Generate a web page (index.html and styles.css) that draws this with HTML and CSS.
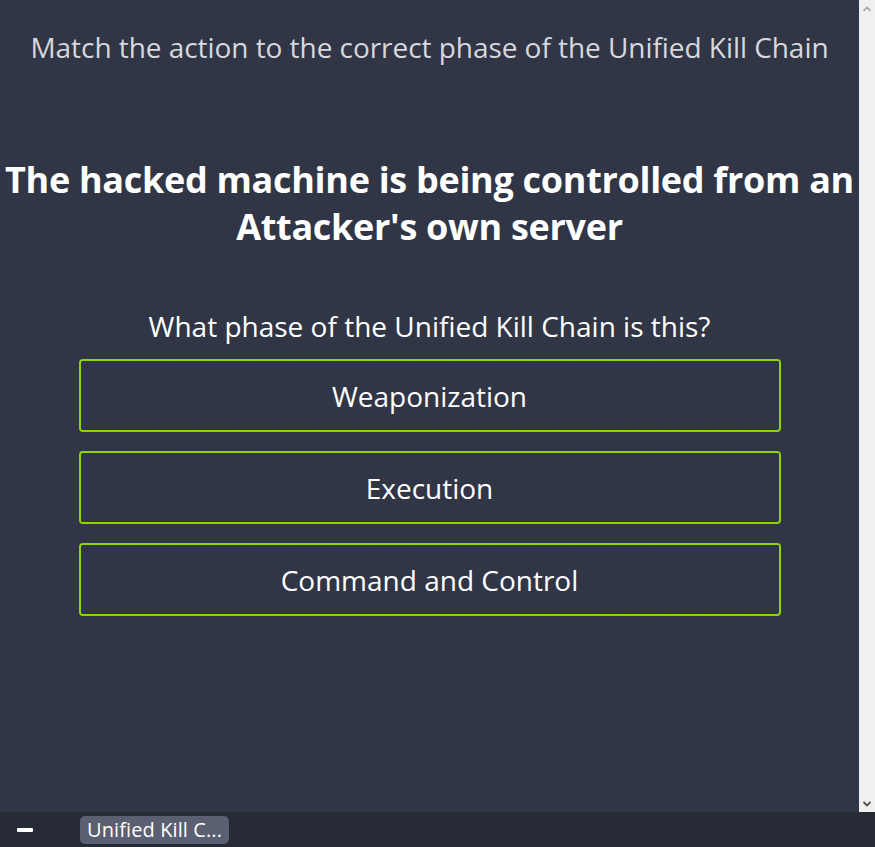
FILE: index.html
```html
<!DOCTYPE html>
<html>
<head>
<meta charset="utf-8">
<link rel="stylesheet" href="styles.css">
</head>
<body>
<div class="window">
  <div class="viewport">
    <main class="content">
      <p class="instruction">Match the action to the correct phase of the Unified Kill Chain</p>
      <h1 class="scenario">The hacked machine is being controlled from an Attacker's own server</h1>
      <p class="question">What phase of the Unified Kill Chain is this?</p>
      <div class="options">
        <button class="option">Weaponization</button>
        <button class="option">Execution</button>
        <button class="option">Command and Control</button>
      </div>
    </main>
    <div class="scrollbar">
      <svg class="arrow" width="16" height="16" viewBox="0 0 16 16"><path d="M4.5 10 L8 6.5 L11.5 10" fill="none" stroke="#a3a3a3" stroke-width="1.6"/></svg>
      <div class="track"></div>
      <svg class="arrow" width="16" height="16" viewBox="0 0 16 16"><path d="M4.5 6 L8 9.5 L11.5 6" fill="none" stroke="#505050" stroke-width="1.8"/></svg>
    </div>
  </div>
  <footer class="taskbar">
    <span class="minimize"></span>
    <span class="tab">Unified Kill C...</span>
  </footer>
</div>
</body>
</html>
```
FILE: styles.css
```css
html, body {
  margin: 0;
  padding: 0;
  background: #313646;
}
.window {
  width: 875px;
  height: 847px;
  display: flex;
  flex-direction: column;
  overflow: hidden;
  font-family: "Open Sans", "Noto Sans", sans-serif;
}
.viewport {
  height: 812px;
  display: flex;
}
.content {
  flex: 1;
  background: #313646;
  display: flex;
  flex-direction: column;
  align-items: center;
  color: #ffffff;
}
.instruction {
  margin: 28px 0 0;
  font-size: 28px;
  line-height: 38px;
  color: #d6d8de;
  white-space: nowrap;
  letter-spacing: -0.05px;
}
.scenario {
  margin: 90px 0 0;
  font-size: 36px;
  line-height: 47px;
  font-weight: 700;
  text-align: center;
  letter-spacing: -0.3px;
  width: 859px;
}
.question {
  margin: 57px 0 0;
  font-size: 28px;
  line-height: 38px;
  white-space: nowrap;
}
.options {
  margin-top: 14px;
  display: flex;
  flex-direction: column;
  gap: 19px;
  width: 702px;
}
.option {
  height: 73px;
  background: transparent;
  border: 2px solid #8fd400;
  border-radius: 4px;
  outline: 1px dashed #2a2f66;
  outline-offset: -3px;
  color: #ffffff;
  font-family: inherit;
  font-size: 28px;
  padding: 0;
}
.scrollbar {
  width: 16px;
  background: #f0f0f0;
  display: flex;
  flex-direction: column;
}
.arrow { display: block; margin-top: 1px; }
.track { flex: 1; }
.taskbar {
  height: 35px;
  background: #272b35;
  display: flex;
  align-items: center;
}
.minimize {
  width: 16px;
  height: 4px;
  background: #ffffff;
  border-radius: 1px;
  margin-left: 17px;
}
.tab {
  margin-left: 47px;
  height: 28px;
  padding: 0 7px;
  background: #5a5f72;
  border-radius: 5px;
  color: #ffffff;
  font-size: 20px;
  line-height: 28px;
  letter-spacing: 0.1px;
}
```
